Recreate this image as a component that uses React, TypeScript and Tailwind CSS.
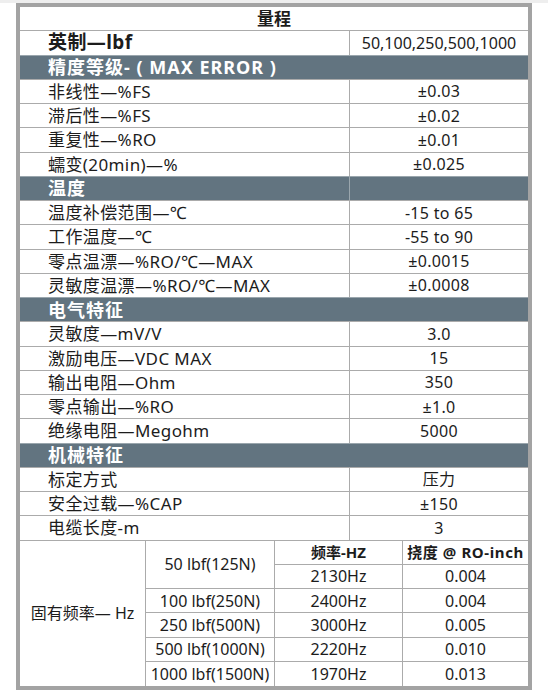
import React from "react";

const font = { fontFamily: '"Noto Sans", "Noto Sans CJK SC", sans-serif' };

type Row =
  | { kind: "head"; label: string; divider?: boolean }
  | { kind: "row"; label: string; value: string };

const rows: Row[] = [
  { kind: "head", label: "精度等级- ( MAX ERROR )" },
  { kind: "row", label: "非线性—%FS", value: "±0.03" },
  { kind: "row", label: "滞后性—%FS", value: "±0.02" },
  { kind: "row", label: "重复性—%RO", value: "±0.01" },
  { kind: "row", label: "蠕变(20min)—%", value: "±0.025" },
  { kind: "head", label: "温度", divider: true },
  { kind: "row", label: "温度补偿范围—℃", value: "-15 to 65" },
  { kind: "row", label: "工作温度—℃", value: "-55 to 90" },
  { kind: "row", label: "零点温漂—%RO/℃—MAX", value: "±0.0015" },
  { kind: "row", label: "灵敏度温漂—%RO/℃—MAX", value: "±0.0008" },
  { kind: "head", label: "电气特征" },
  { kind: "row", label: "灵敏度—mV/V", value: "3.0" },
  { kind: "row", label: "激励电压—VDC MAX", value: "15" },
  { kind: "row", label: "输出电阻—Ohm", value: "350" },
  { kind: "row", label: "零点输出—%RO", value: "±1.0" },
  { kind: "row", label: "绝缘电阻—Megohm", value: "5000" },
  { kind: "head", label: "机械特征" },
  { kind: "row", label: "标定方式", value: "压力" },
  { kind: "row", label: "安全过载—%CAP", value: "±150" },
  { kind: "row", label: "电缆长度-m", value: "3" },
];

const freq = [
  ["100 lbf(250N)", "2400Hz", "0.004"],
  ["250 lbf(500N)", "3000Hz", "0.005"],
  ["500 lbf(1000N)", "2220Hz", "0.010"],
  ["1000 lbf(1500N)", "1970Hz", "0.013"],
];

export default function App() {
  return (
    <div className="w-[548px] h-[695px] bg-white text-[#1c1c1c]" style={font}>
      <div className="h-[3px] bg-[#eeeeee]" />
      <div className="ml-[16px] w-[516px] border-4 border-[#a3a3a3] flex flex-col">
        <div className="h-[23.25px] flex items-center justify-center text-[17px] font-bold leading-none">
          量程
        </div>
        <div className="h-[24.25px] flex border-t border-[#ababab]">
          <div className="w-[330px] border-r border-[#ababab] flex items-center pl-[28px] text-[19px] font-bold leading-none tracking-[0.4px]">
            英制—lbf
          </div>
          <div className="flex-1 flex items-center justify-center text-[16px] leading-none">
            50,100,250,500,1000
          </div>
        </div>
        {rows.map((r, i) =>
          r.kind === "head" ? (
            <div
              key={i}
              className="h-[24.25px] flex bg-[#627480] border-t border-[#9aa6ad] text-white font-bold text-[18px] leading-none tracking-[1px]"
            >
              <div
                className={
                  "w-[330px] flex items-center pl-[28px] " +
                  (r.divider ? "border-r border-[#9aa6ad]" : "")
                }
              >
                {r.label}
              </div>
              <div className="flex-1" />
            </div>
          ) : (
            <div key={i} className="h-[24.25px] flex border-t border-[#ababab] text-[17px] leading-none">
              <div className="w-[330px] border-r border-[#ababab] flex items-center pl-[28px] tracking-[0.4px]">
                {r.label}
              </div>
              <div className="flex-1 flex items-center justify-center text-[16px] tracking-[0.3px]">{r.value}</div>
            </div>
          )
        )}
        <div className="grid grid-cols-[126px_129px_128px_125px] grid-rows-[repeat(6,24.25px)] border-t border-[#ababab] text-[16px] leading-none">
          <div className="row-span-6 border-r border-[#ababab] flex items-center justify-center">
            固有频率— Hz
          </div>
          <div className="row-span-2 border-r border-b border-[#ababab] flex items-center justify-center">
            50 lbf(125N)
          </div>
          <div className="border-r border-b border-[#ababab] flex items-center justify-center font-bold text-[15px]">
            频率-HZ
          </div>
          <div className="border-b border-[#ababab] flex items-center justify-center font-bold text-[15px] tracking-[0.6px]">
            挠度 @ RO-inch
          </div>
          <div className="border-r border-b border-[#ababab] flex items-center justify-center">2130Hz</div>
          <div className="border-b border-[#ababab] flex items-center justify-center">0.004</div>
          {freq.map((f, i) => {
            const last = i === freq.length - 1;
            const b = last ? "" : " border-b";
            return (
              <React.Fragment key={i}>
                <div className={"border-r border-[#ababab] flex items-center justify-center" + b}>{f[0]}</div>
                <div className={"border-r border-[#ababab] flex items-center justify-center" + b}>{f[1]}</div>
                <div className={"border-[#ababab] flex items-center justify-center" + b}>{f[2]}</div>
              </React.Fragment>
            );
          })}
        </div>
      </div>
    </div>
  );
}
